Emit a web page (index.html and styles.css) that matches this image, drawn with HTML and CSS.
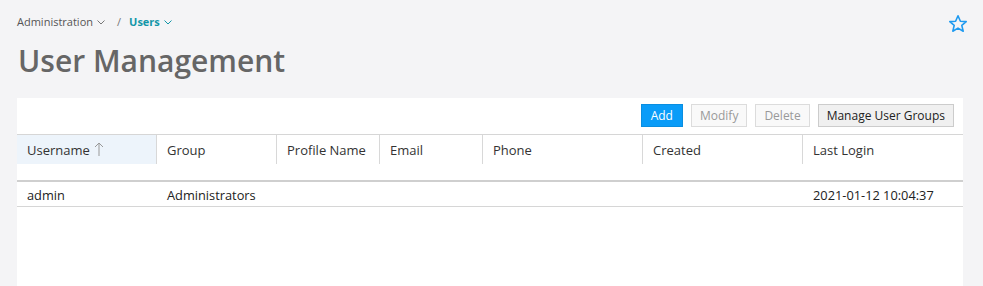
FILE: index.html
```html
<!DOCTYPE html>
<html>
<head>
<meta charset="utf-8">
<link rel="stylesheet" href="styles.css">
</head>
<body>
<div class="page">
  <div class="topbar">
    <nav class="crumbs">
      <span class="crumb">Administration <svg class="chev" viewBox="0 0 8 5" width="8" height="5"><path d="M0.5 0.5 L4 4 L7.5 0.5" fill="none" stroke="currentColor" stroke-width="1"/></svg></span>
      <span class="sep">/</span>
      <span class="crumb current">Users <svg class="chev" viewBox="0 0 8 5" width="8" height="5"><path d="M0.5 0.5 L4 4 L7.5 0.5" fill="none" stroke="currentColor" stroke-width="1"/></svg></span>
    </nav>
    <svg class="star" viewBox="0 0 20 20" width="20" height="20"><path d="M10 1.8 L12.4 7.2 L18.2 7.6 L13.8 11.4 L15.2 17.2 L10 14.1 L4.8 17.2 L6.2 11.4 L1.8 7.6 L7.6 7.2 Z" fill="none" stroke="#1e9af0" stroke-width="1.6" stroke-linejoin="round"/></svg>
  </div>
  <h1 class="title">User Management</h1>
  <div class="panel">
    <div class="toolbar">
      <button class="btn primary">Add</button>
      <button class="btn disabled">Modify</button>
      <button class="btn disabled">Delete</button>
      <button class="btn">Manage User Groups</button>
    </div>
    <div class="grid head">
      <div class="hc sorted">Username <svg class="arrow" viewBox="0 0 10 16" width="10" height="16"><path d="M5 15 V2 M1 6 L5 2 L9 6" fill="none" stroke="#999" stroke-width="1"/></svg></div>
      <div class="hc">Group</div>
      <div class="hc">Profile Name</div>
      <div class="hc">Email</div>
      <div class="hc">Phone</div>
      <div class="hc">Created</div>
      <div class="hc last">Last Login</div>
    </div>
    <div class="spacer"></div>
    <div class="grid row">
      <div class="c">admin</div>
      <div class="c">Administrators</div>
      <div class="c"></div>
      <div class="c"></div>
      <div class="c"></div>
      <div class="c"></div>
      <div class="c">2021-01-12 10:04:37</div>
    </div>
  </div>
</div>
</body>
</html>
```
FILE: styles.css
```css
html, body {
  margin: 0;
  padding: 0;
  background: #f4f4f6;
  font-family: "Open Sans", "Liberation Sans", sans-serif;
  color: #333;
}
.page {
  padding: 0 20px 0 17px;
}
.topbar {
  display: flex;
  justify-content: space-between;
  align-items: flex-start;
  height: 39px;
}
.crumbs {
  display: flex;
  align-items: center;
  font-size: 11px;
  color: #555;
  padding-top: 14px;
}
.crumb {
  display: inline-flex;
  align-items: center;
  gap: 4px;
}
.chev { color: #777; margin-top: 1px; }
.sep {
  color: #777;
  margin: 0 8px 0 12px;
}
.current {
  color: #1296a8;
  font-weight: 700;
}
.current .chev { color: #1296a8; }
.star {
  margin-top: 14px;
  margin-right: -5px;
}
.title {
  margin: 0;
  font-size: 30px;
  font-weight: 600;
  color: #666;
  line-height: 44px;
  height: 59px;
  padding-left: 1px;
}
.panel {
  background: #fff;
  height: 200px;
}
.toolbar {
  display: flex;
  justify-content: flex-end;
  gap: 8px;
  padding: 6px 9px 0 0;
  height: 30px;
  border-bottom: 1px solid #d6d6d6;
}
.btn {
  font-family: "Open Sans", "Liberation Sans", sans-serif;
  font-size: 12px;
  height: 23px;
  padding: 0 8px;
  border: 1px solid #ccc;
  background: #f0f0f0;
  color: #222;
  border-radius: 0;
  line-height: 20px;
}
.btn.primary {
  background: #0a9cf8;
  border-color: #0a8ee0;
  color: #fff;
  padding: 0 9px;
}
.btn.disabled {
  background: #f9f9f9;
  border-color: #dcdcdc;
  color: #999;
}
.grid {
  display: grid;
  grid-template-columns: 140px 120px 103px 103px 160px 160px 1fr;
}
.head {
  height: 29px;
}
.hc {
  font-size: 13px;
  color: #333;
  padding-left: 10px;
  display: flex;
  align-items: center;
  border-right: 1px solid #d8d8d8;
}
.hc.last { border-right: none; }
.hc.sorted {
  background: #edf4fb;
  gap: 4px;
}
.arrow { margin-top: -2px; }
.spacer {
  height: 16px;
  border-bottom: 2px solid #cfcfcf;
}
.row {
  height: 24px;
  border-bottom: 1px solid #d6d6d6;
}
.c {
  font-size: 12.8px;
  color: #222;
  padding-left: 10px;
  padding-top: 2px;
  display: flex;
  align-items: center;
}
```
